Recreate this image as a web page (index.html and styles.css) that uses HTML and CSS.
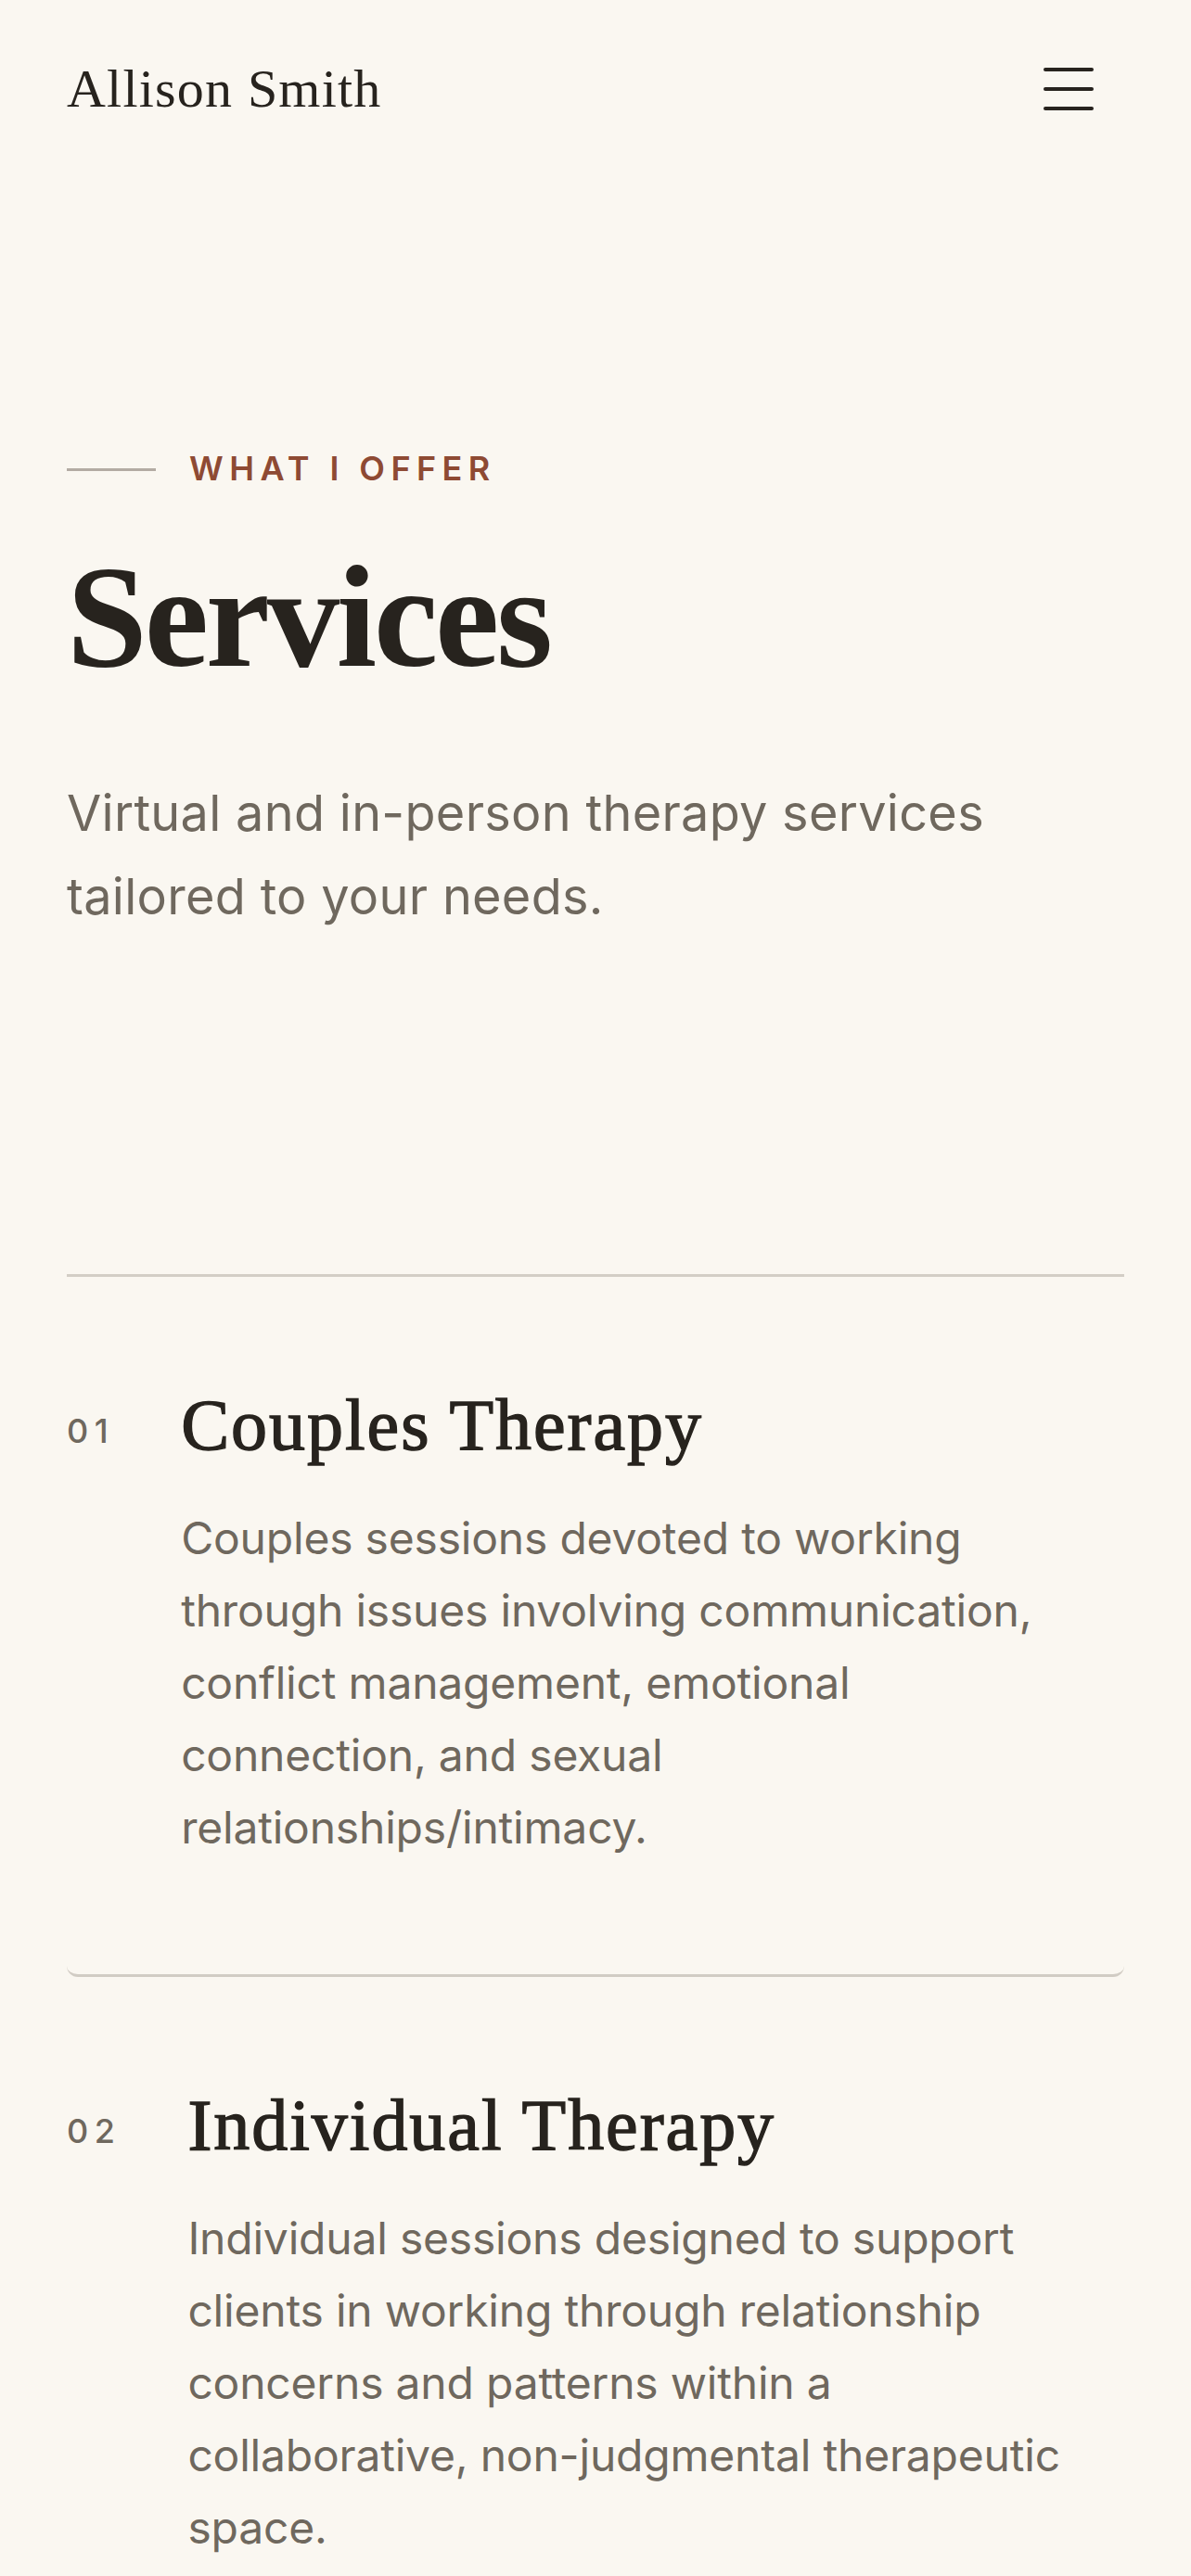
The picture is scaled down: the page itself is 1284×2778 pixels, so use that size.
FILE: index.html
```html
<!DOCTYPE html>
<html lang="en">
<head>
<meta charset="utf-8">
<title>Services — Allison Smith</title>
<link rel="stylesheet" href="styles.css">
</head>
<body>
<header class="site-header">
  <a class="logo" href="#">Allison Smith</a>
  <button class="menu-btn" aria-label="Open menu">
    <svg class="menu-icon" viewBox="0 0 54 46" width="54" height="46" aria-hidden="true">
      <line x1="2" y1="2" x2="52" y2="2"/>
      <line x1="2" y1="23" x2="52" y2="23"/>
      <line x1="2" y1="44" x2="52" y2="44"/>
    </svg>
  </button>
</header>

<main class="page">
  <section class="intro">
    <div class="eyebrow">
      <span class="eyebrow-line"></span>
      <span class="eyebrow-text">WHAT I OFFER</span>
    </div>
    <h1 class="title">Services</h1>
    <p class="lead">Virtual and in-person therapy services tailored to your needs.</p>
  </section>

  <ol class="services">
    <li class="service">
      <span class="service-num">01</span>
      <div class="service-body">
        <h2 class="service-title">Couples Therapy</h2>
        <p class="service-desc">Couples sessions devoted to working through issues involving communication, conflict management, emotional connection, and sexual relationships/intimacy.</p>
      </div>
    </li>
    <li class="service">
      <span class="service-num">02</span>
      <div class="service-body">
        <h2 class="service-title">Individual Therapy</h2>
        <p class="service-desc">Individual sessions designed to support clients in working through relationship concerns and patterns within a collaborative, non-judgmental therapeutic space.</p>
      </div>
    </li>
  </ol>
</main>
</body>
</html>
```

FILE: styles.css
```css
* { box-sizing: border-box; }

html, body {
  margin: 0;
  padding: 0;
  background: #faf7f1;
}

body {
  font-family: "Inter", "Noto Sans", sans-serif;
  color: #27231e;
}

.site-header {
  height: 192px;
  padding: 0 72px;
  display: flex;
  align-items: center;
  justify-content: space-between;
}

.logo {
  font-family: "Liberation Serif", "Times New Roman", serif;
  font-size: 58px;
  line-height: 1.2;
  letter-spacing: 1.2px;
  color: #27231e;
  text-decoration: none;
}

.menu-btn {
  background: none;
  border: 0;
  padding: 0;
  margin-right: 33px;
  display: flex;
  cursor: pointer;
}

.menu-icon line {
  stroke: #27231e;
  stroke-width: 4;
  stroke-linecap: round;
}

.page {
  padding: 0 72px 40px;
}

.intro {
  padding-top: 292px;
}

.eyebrow {
  display: flex;
  align-items: center;
  gap: 36px;
  height: 44px;
}

.eyebrow-line {
  width: 96px;
  height: 3px;
  background: #b3aba3;
}

.eyebrow-text {
  font-size: 36px;
  font-weight: 600;
  letter-spacing: 0.178em;
  color: #8e4a33;
  line-height: 1.2;
}

.title {
  margin: 60px 0 0;
  font-family: "Liberation Serif", "Times New Roman", serif;
  font-size: 156px;
  font-weight: 700;
  letter-spacing: -0.02em;
  line-height: 1;
  color: #27231e;
}

.lead {
  margin: 88px 0 0;
  font-size: 54px;
  line-height: 90px;
  letter-spacing: 0.3px;
  color: #6f685e;
}

.services {
  list-style: none;
  margin: 362px 0 0;
  padding: 0;
  border-top: 3px solid #d3cec6;
}

.service {
  display: flex;
  align-items: flex-start;
  gap: 72px;
  padding: 117px 0 119px;
  border-bottom: 3px solid #d1ccc4;
  border-radius: 12px;
}

.service-num {
  padding-top: 28px;
  font-size: 36px;
  font-weight: 500;
  line-height: 1.2;
  letter-spacing: 0.18em;
  color: #6f685e;
}

.service-body {
  flex: 1;
}

.service-title {
  margin: 0;
  font-family: "Liberation Serif", "Times New Roman", serif;
  font-size: 78px;
  font-weight: 400;
  line-height: 1.1;
  letter-spacing: 0.025em;
  -webkit-text-stroke: 1.4px #27231e;
  color: #27231e;
}

.service-desc {
  max-width: 960px;
  margin: 40px 0 0;
  font-size: 48px;
  line-height: 78px;
  letter-spacing: -0.2px;
  color: #6f685e;
}
```
